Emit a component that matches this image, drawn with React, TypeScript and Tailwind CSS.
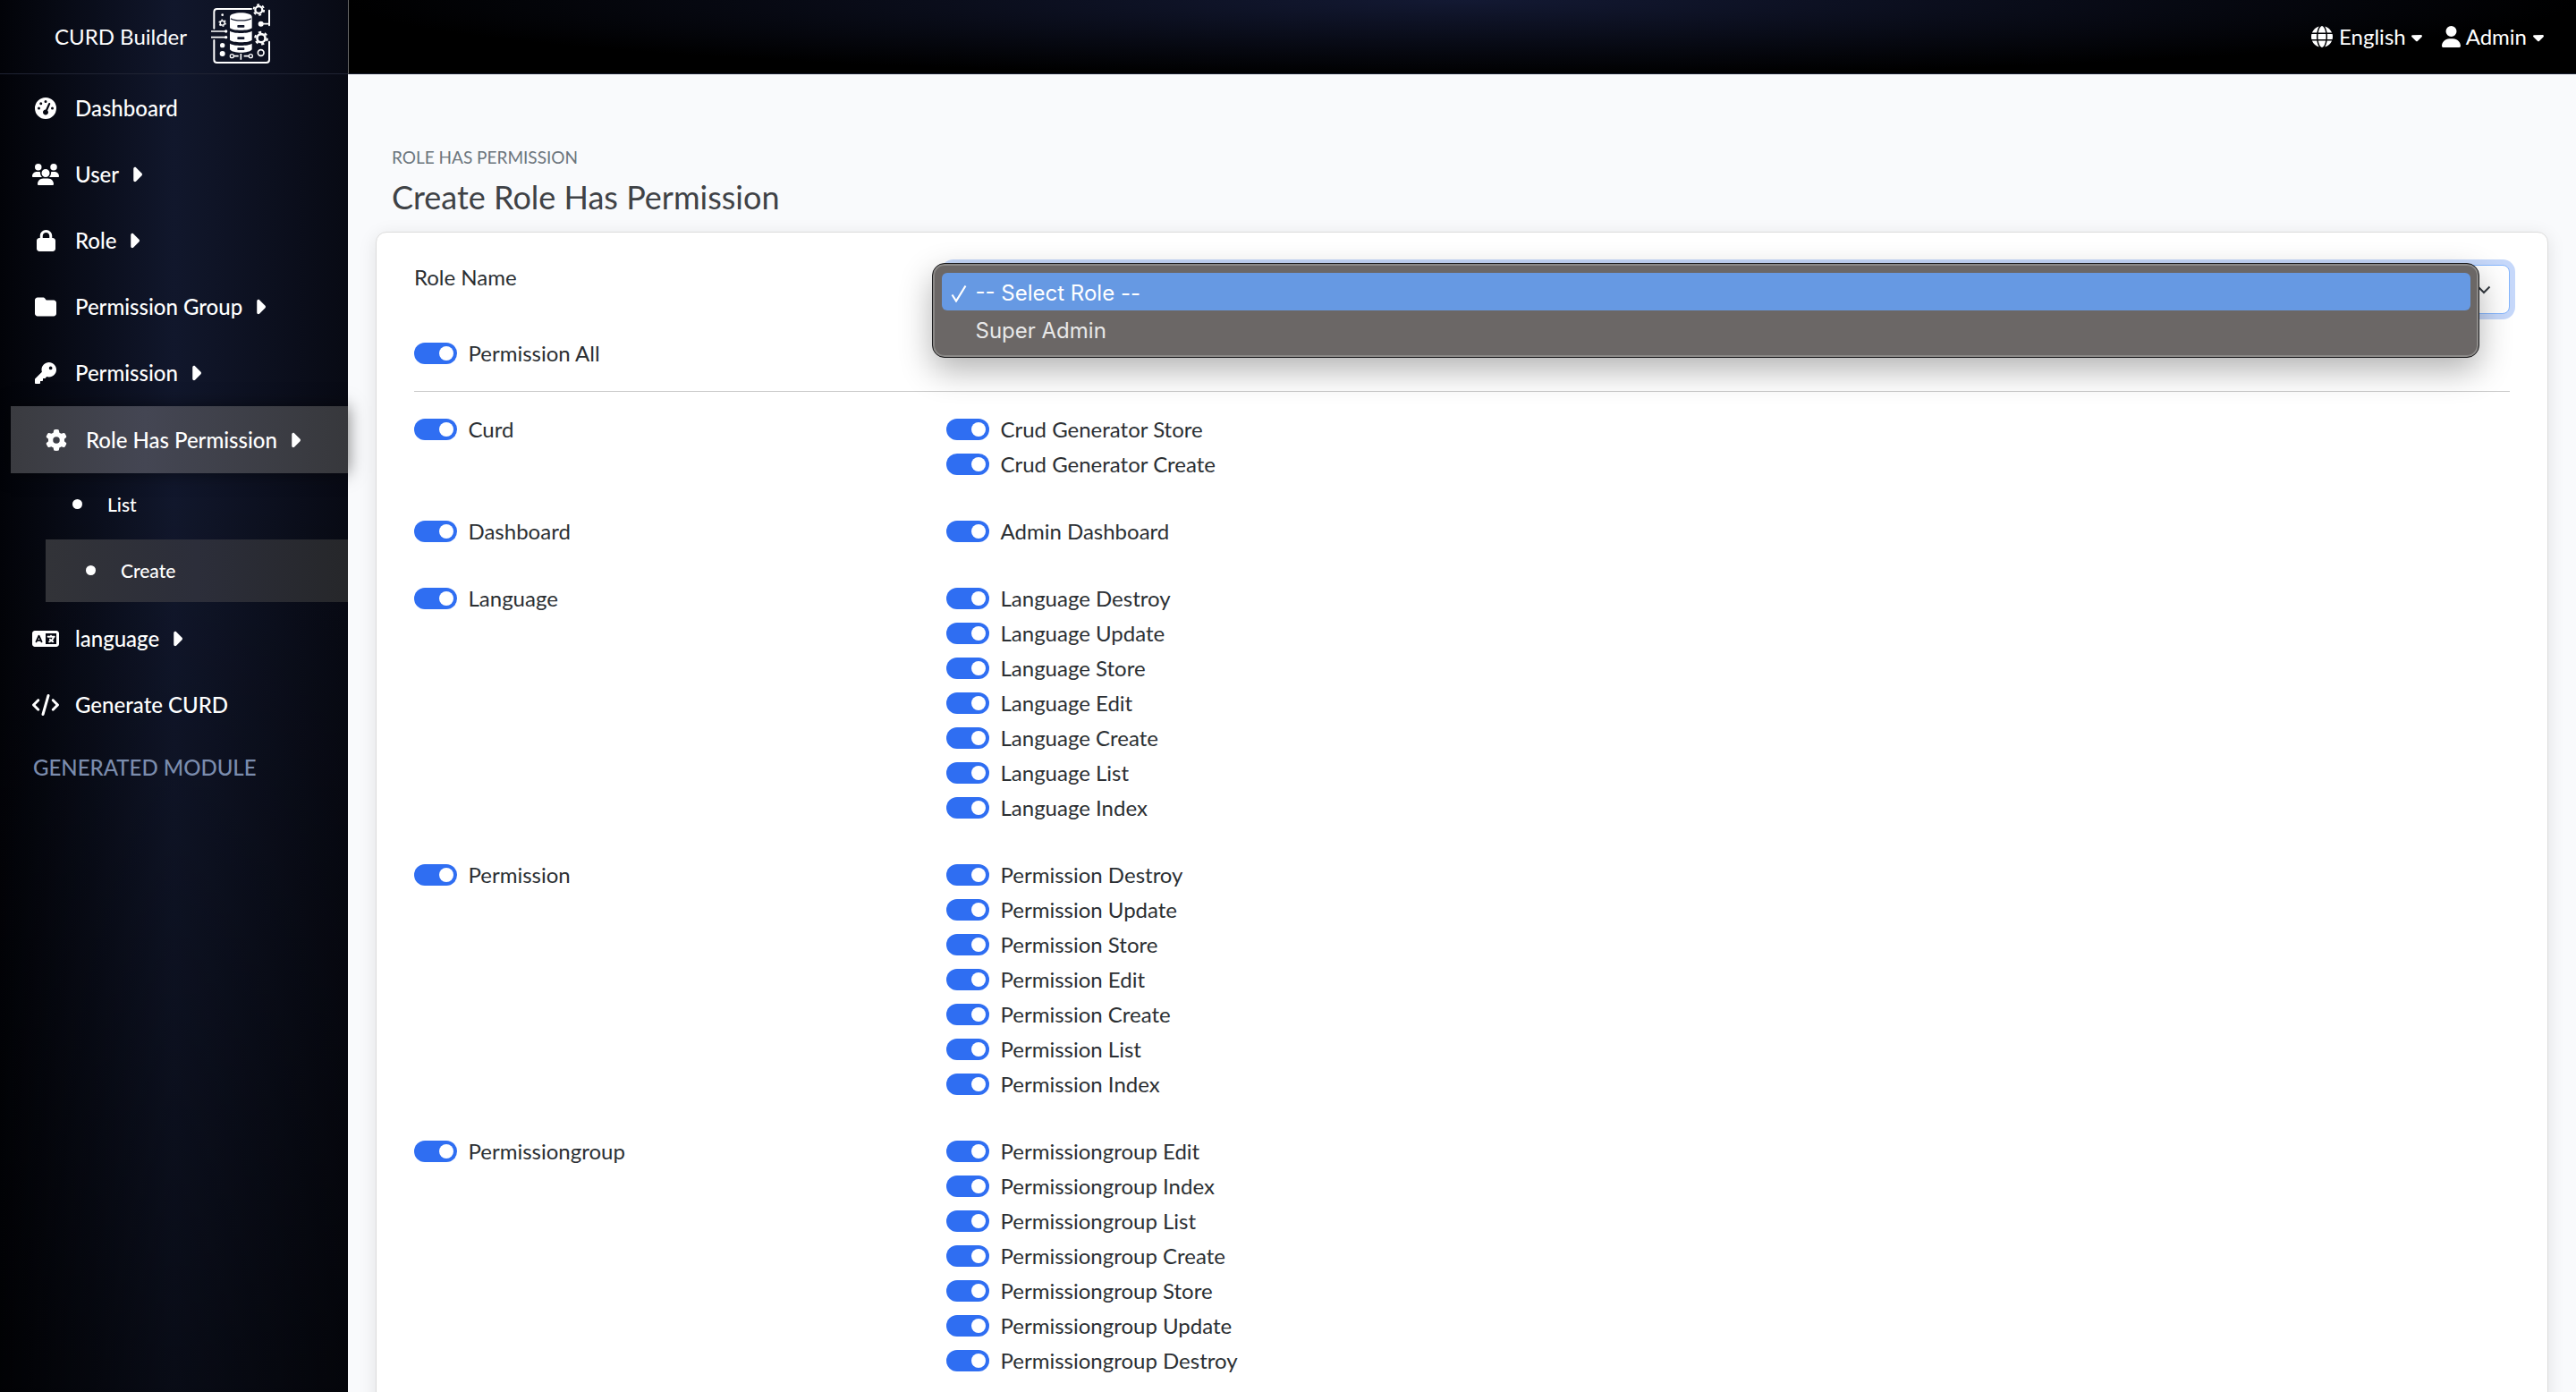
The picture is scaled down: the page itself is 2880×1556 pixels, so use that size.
import React from "react";
import { FaGaugeHigh, FaUsers, FaLock, FaFolder, FaKey, FaGear, FaCaretRight, FaCircle, FaLanguage, FaCode, FaGlobe, FaUser, FaCaretDown } from "react-icons/fa6";

function Gear({ cx, cy, r }: { cx: number; cy: number; r: number }) {
  return (
    <g fill="none" stroke="white">
      <circle cx={cx} cy={cy} r={r * 0.62} strokeWidth={r * 0.36} />
      <circle cx={cx} cy={cy} r={r * 0.92} strokeWidth={r * 0.3} strokeDasharray={`${r * 0.45} ${r * 0.52}`} />
    </g>
  );
}

function Logo() {
  return (
    <svg width="90" height="80" viewBox="0 0 270 240" fill="none" stroke="white" strokeWidth="6">
      <path d="M165 30H50q-10 0-10 10v55M40 135v65q0 10 10 10h165q10 0 10-10v-60M225 35v50" strokeLinecap="round" />
      <Gear cx={190} cy={33} r={19} />
      <Gear cx={198} cy={128} r={22} />
      <Gear cx={68} cy={77} r={12} />
      <g fill="white" stroke="none">
        <path d="M93 56c0-18 74-18 74 0v38c-8 10-66 10-74 0z" />
        <path d="M93 104c12 9 62 9 74 0v30c-8 10-66 10-74 0z" />
        <path d="M93 146c12 9 62 9 74 0v20c-8 14-66 14-74 0z" />
        <circle cx="68" cy="50" r="4" />
        <circle cx="68" cy="152" r="8" />
        <circle cx="68" cy="180" r="9" />
        <circle cx="197" cy="80" r="9" />
        <circle cx="80" cy="105" r="5" />
        <circle cx="80" cy="125" r="5" />
      </g>
      <path d="M96 62c12 9 56 9 68 0" stroke="#12172b" strokeWidth="4" />
      <g fill="#12172b" stroke="none">
        <rect x="118" y="84" width="24" height="8" rx="2" />
        <rect x="118" y="124" width="24" height="8" rx="2" />
        <rect x="118" y="160" width="24" height="8" rx="2" />
      </g>
      <path d="M197 80h28M30 105h50M30 125h50M106 188h16M130 180v20M140 188h16" strokeWidth="5" />
      <circle cx="100" cy="188" r="6" strokeWidth="4" />
      <circle cx="163" cy="188" r="6" strokeWidth="4" />
      <circle cx="197" cy="177" r="10" strokeWidth="5" />
    </svg>
  );
}

function Caret() {
  return <FaCaretRight className="ml-[13px] h-[26px] w-[13px] shrink-0" />;
}

function NavItem({ icon, label, caret }: { icon: React.ReactNode; label: string; caret?: boolean }) {
  return (
    <div className="flex h-[74.2px] items-center pl-[36px] pt-[1px] text-[24px] font-medium text-white">
      <span className="flex w-[30px] justify-center">{icon}</span>
      <span className="ml-[18px]">{label}</span>
      {caret && <Caret />}
    </div>
  );
}

function Toggle() {
  return (
    <span className="relative block h-[24px] w-[48px] shrink-0 rounded-full bg-[#2f6ef2]">
      <span className="absolute right-[4px] top-[4px] block h-[16px] w-[16px] rounded-full bg-white" />
    </span>
  );
}

function Switch({ label }: { label: string }) {
  return (
    <div className="mb-[9px] flex h-[30px] items-center gap-[12.5px] text-[24px] text-[#2b2f33]">
      <Toggle />
      <span>{label}</span>
    </div>
  );
}

const groups: { name: string; items: string[] }[] = [
  { name: "Curd", items: ["Crud Generator Store", "Crud Generator Create"] },
  { name: "Dashboard", items: ["Admin Dashboard"] },
  { name: "Language", items: ["Language Destroy", "Language Update", "Language Store", "Language Edit", "Language Create", "Language List", "Language Index"] },
  { name: "Permission", items: ["Permission Destroy", "Permission Update", "Permission Store", "Permission Edit", "Permission Create", "Permission List", "Permission Index"] },
  { name: "Permissiongroup", items: ["Permissiongroup Edit", "Permissiongroup Index", "Permissiongroup List", "Permissiongroup Create", "Permissiongroup Store", "Permissiongroup Update", "Permissiongroup Destroy"] },
];

const square = "h-[24px] w-[24px]";
const wide = "h-[24px] w-[30px] shrink-0";

export default function App() {
  return (
    <div className="flex h-[1556px] w-[2880px] overflow-hidden bg-[#f9fafc] font-['Lato',sans-serif]">
      <aside className="flex w-[389px] shrink-0 flex-col bg-[linear-gradient(180deg,transparent_35%,rgba(0,0,0,0.5)_100%),linear-gradient(90deg,#020308_0%,#11172c_50%,#080a14_100%)]">
        <div className="flex h-[83px] items-center border-b border-[#1f2333] pl-[61px] text-[24px] text-white">
          <span>CURD Builder</span>
          <span className="-mt-[3px] ml-[17px]"><Logo /></span>
        </div>
        <NavItem icon={<FaGaugeHigh className={square} />} label="Dashboard" />
        <NavItem icon={<FaUsers className={wide} />} label="User" caret />
        <NavItem icon={<FaLock className="h-[24px] w-[21px]" />} label="Role" caret />
        <NavItem icon={<FaFolder className={square} />} label="Permission Group" caret />
        <NavItem icon={<FaKey className={square} />} label="Permission" caret />
        <div className="ml-[12px] flex h-[75px] items-center bg-[linear-gradient(90deg,#3a3b40_0%,#444653_40%,#37383c_100%)] pl-[36px] pt-[2px] text-[24px] font-medium text-white shadow-[0_0_18px_rgba(0,0,0,0.5)]">
          <span className="flex w-[30px] justify-center"><FaGear className={square} /></span>
          <span className="ml-[18px]">Role Has Permission</span>
          <Caret />
        </div>
        <div className="flex h-[74px] items-center pb-[4px] pl-[81px] text-[21px] font-medium text-white">
          <FaCircle className="h-[11px] w-[11px]" />
          <span className="ml-[28px]">List</span>
        </div>
        <div className="ml-[51px] flex h-[70px] items-center bg-[linear-gradient(90deg,#323338_0%,#2c2e3a_50%,#26272a_100%)] pl-[45px] text-[21px] font-medium text-white">
          <FaCircle className="h-[11px] w-[11px]" />
          <span className="ml-[28px]">Create</span>
        </div>
        <div className="h-[3px]" />
        <NavItem icon={<FaLanguage className={wide} />} label="language" caret />
        <NavItem icon={<FaCode className={wide} />} label="Generate CURD" />
        <div className="pl-[37px] pt-[16px] text-[24px] font-medium text-[#7b8cad]">GENERATED MODULE</div>
      </aside>
      <div className="flex min-w-0 flex-1 flex-col">
        <header className="flex h-[83px] shrink-0 items-center justify-end border-b border-l border-b-[#1a2030] border-l-[#666] bg-[radial-gradient(ellipse_1250px_85px_at_50%_0%,#131933,#000000)] pr-[36px] text-[24px] text-white">
          <FaGlobe className={square} />
          <span className="ml-[7px]">English</span>
          <FaCaretDown className="ml-[6px] h-[19px] w-[12px]" />
          <FaUser className="ml-[22px] h-[24px] w-[21px]" />
          <span className="ml-[6px]">Admin</span>
          <FaCaretDown className="ml-[7px] h-[19px] w-[12px]" />
        </header>
        <main className="flex-1 pl-[31px] pr-[31px]">
          <div className="pl-[18px] pt-[79px] text-[19px] uppercase leading-[28px] text-[#6c757d]">Role Has Permission</div>
          <h1 className="pl-[18px] pt-[7px] text-[36px] font-normal leading-[46px] text-[#3f4246]">Create Role Has Permission</h1>
          <section className="mt-[16px] rounded-t-[12px] border border-[#dcdcdc] bg-white px-[42px] pt-[36px] shadow-[0_4px_20px_rgba(0,0,0,0.1)]">
            <div className="grid grid-cols-[595px_1fr]">
              <div className="text-[24px] leading-[28px] text-[#2b2f33]">Role Name</div>
              <div className="relative h-[55px] rounded-[8px] border border-[#86b7fe] bg-white shadow-[0_0_0_6px_#c6d8fa]">
                <svg className="absolute right-[20px] top-[22px]" width="16" height="10" viewBox="0 0 16 10" fill="none" stroke="#343a40" strokeWidth="2"><path d="M1.5 1.5L8 8l6.5-6.5" /></svg>
                <div className="absolute left-[-17px] top-[-3px] h-[106px] w-[1730px] rounded-[14px] border-[1.5px] border-[#1c1c1e] bg-[#6b6766] p-[9.5px] font-['Inter',sans-serif] text-[24px] text-[#e8e8e8] shadow-[inset_0_0_0_2px_#8b8987,0_14px_36px_rgba(0,0,0,0.3)]">
                  <div className="flex h-[42px] items-center rounded-[6px] bg-[#6699e3] pt-[4px] text-white">
                    <span className="flex w-[38px] justify-center">
                      <svg width="18" height="20" viewBox="0 0 18 20" fill="none" stroke="white" strokeWidth="2.2"><path d="M1.5 11.5L6 18.5 16.5 1.5" /></svg>
                    </span>
                    <span>-- Select Role --</span>
                  </div>
                  <div className="flex h-[42px] items-center pl-[38px] pt-[4px]">Super Admin</div>
                </div>
              </div>
            </div>
            <div className="mt-[29px] flex h-[30px] items-center gap-[12.5px] text-[24px] text-[#2b2f33]">
              <Toggle />
              <span>Permission All</span>
            </div>
            <div className="mt-[27px] border-t border-[#c8c8c8]" />
            <div className="pt-[27px]">
              {groups.map((g) => (
                <div key={g.name} className="mb-[36px] grid grid-cols-[595px_1fr]">
                  <Switch label={g.name} />
                  <div>
                    {g.items.map((i) => (
                      <Switch key={i} label={i} />
                    ))}
                  </div>
                </div>
              ))}
            </div>
          </section>
        </main>
      </div>
    </div>
  );
}
